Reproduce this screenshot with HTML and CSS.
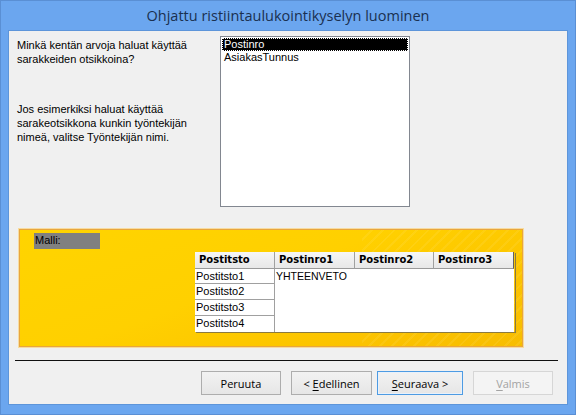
FILE: index.html
```html
<!DOCTYPE html>
<html>
<head>
<meta charset="utf-8">
<link rel="stylesheet" href="styles.css">
</head>
<body>
<div class="window">
  <div class="titlebar">Ohjattu ristiintaulukointikyselyn luominen</div>
  <div class="content">
    <div class="top">
      <div class="help">
        <p class="q">Minkä kentän arvoja haluat käyttää sarakkeiden otsikkoina?</p>
        <p class="ex">Jos esimerkiksi haluat käyttää sarakeotsikkona kunkin työntekijän nimeä, valitse Työntekijän nimi.</p>
      </div>
      <div class="listbox">
        <div class="item sel">Postinro</div>
        <div class="item">AsiakasTunnus</div>
      </div>
    </div>
    <div class="sample">
      <div class="malli">Malli:</div>
      <div class="grid">
        <div class="hd">Postitsto</div>
        <div class="hd">Postinro1</div>
        <div class="hd">Postinro2</div>
        <div class="hd last">Postinro3</div>
        <div class="rh r1">Postitsto1</div>
        <div class="body">YHTEENVETO</div>
        <div class="rh r2">Postitsto2</div>
        <div class="rh r3">Postitsto3</div>
        <div class="rh r4">Postitsto4</div>
      </div>
    </div>
    <div class="sep"></div>
    <div class="buttons">
      <div class="btn b1"><span>Peruuta</span></div>
      <div class="btn b2"><span>&lt;&nbsp;<u>E</u>dellinen</span></div>
      <div class="btn b3 focus"><span><u>S</u>euraava&nbsp;&gt;</span></div>
      <div class="btn b4 disabled"><span><u>V</u>almis</span></div>
    </div>
  </div>
</div>
</body>
</html>
```
FILE: styles.css
```css
* { box-sizing: border-box; }
html, body { margin: 0; padding: 0; }
body { width: 576px; height: 415px; overflow: hidden; font-family: "Liberation Sans", Arial, sans-serif; }
.window {
  width: 576px; height: 415px;
  background: #6ba6ef;
  border: 1px solid #5a8fd4;
  display: flex; flex-direction: column;
  padding: 0 7px 9px 7px;
}
.titlebar {
  height: 29px;
  display: flex; align-items: center; justify-content: center;
  font-family: "Open Sans", "Noto Sans", sans-serif;
  font-size: 14.5px;
  color: #1a3050;
  padding-bottom: 1px;
}
.content {
  flex: 1;
  background: #f0f0f0;
  border: 1px solid #5d95da;
  display: flex; flex-direction: column;
  font-size: 11px;
  color: #000;
}
.top { display: flex; height: 198px; }
.help { width: 211px; padding: 7px 0 0 8px; }
.help p { margin: 0; line-height: 14px; }
.help .q { margin-bottom: 36px; }
.listbox {
  margin-top: 5px;
  width: 190px; height: 171px;
  background: #fff;
  border: 1px solid #828790;
  padding: 1px;
}
.item { height: 13px; line-height: 13px; padding-left: 2px; font-size: 11px; }
.item.sel { background: #000; color: #fff; outline: 1px dotted #fff; outline-offset: -1px; }
.sample {
  margin: 0 0 0 10px;
  width: 504px; height: 118px;
  border: 1px solid #e8a640;
  box-shadow: 0 0 0 1px #f7dca0;
  background:
    repeating-linear-gradient(135deg, rgba(255,255,255,0) 0 6px, rgba(255,240,170,0.1) 6px 8px) right top / 160px 100% no-repeat,
    linear-gradient(160deg, #ffd400 0%, #ffd000 45%, #fcc400 75%, #f7bd00 100%);
  padding: 3px 0 0 14px;
}
.malli {
  width: 66px; height: 16px; line-height: 15px;
  background: #808080; color: #000;
  padding-left: 1px;
}
.grid {
  margin: 3px 0 0 161px;
  display: grid;
  grid-template-columns: 80px 80px 79px 80px;
  grid-template-rows: 17px 15px 16px 16px 16px;
  width: 320px;
  box-shadow: 1px 1px 0 #8a7a40;
}
.hd {
  background: linear-gradient(#f6f6f6, #e8e8e8);
  border-right: 1px solid #a0a0a0;
  border-bottom: 1px solid #9a9a9a;
  font-family: "DejaVu Sans", Verdana, sans-serif;
  font-weight: bold; font-size: 10px;
  line-height: 16px;
  padding-left: 4px;
}
.hd.last { border-right: 1px solid #606060; }
.rh {
  grid-column: 1;
  background: #fff;
  border-right: 1px solid #a0a0a0;
  border-bottom: 1px solid #a0a0a0;
  padding-left: 1px;
  line-height: 15px;
}
.r1 { grid-row: 2; } .r2 { grid-row: 3; } .r3 { grid-row: 4; } .r4 { grid-row: 5; border-bottom: none; }
.body {
  grid-column: 2 / 5; grid-row: 2 / 6;
  background: #fff;
  padding-left: 1px;
  line-height: 14px;
  font-size: 10.5px;
}
.sep { margin: 13px 9px 0 6px; height: 1px; background: #101010; }
.buttons { display: flex; margin: 10px 0 0 192px; }
.btn {
  height: 24px;
  border: 1px solid #adadad;
  background: linear-gradient(#f2f2f2, #e6e6e6);
  display: flex; align-items: center; justify-content: center;
  font-family: "Open Sans", "Noto Sans", sans-serif;
  font-size: 11px;
}
.b1 { width: 80px; }
.b2 { width: 81px; margin-left: 10px; }
.b3 { width: 86px; margin-left: 5px; }
.b4 { width: 80px; margin-left: 10px; }
.btn.focus { border-color: #4d9be3; box-shadow: inset 0 0 0 1px #e8f1fb; }
.btn.disabled { color: #a3a3a3; border-color: #d6d6d6; background: #f4f4f4; }
u { text-decoration: underline; text-underline-offset: 2px; }
```
